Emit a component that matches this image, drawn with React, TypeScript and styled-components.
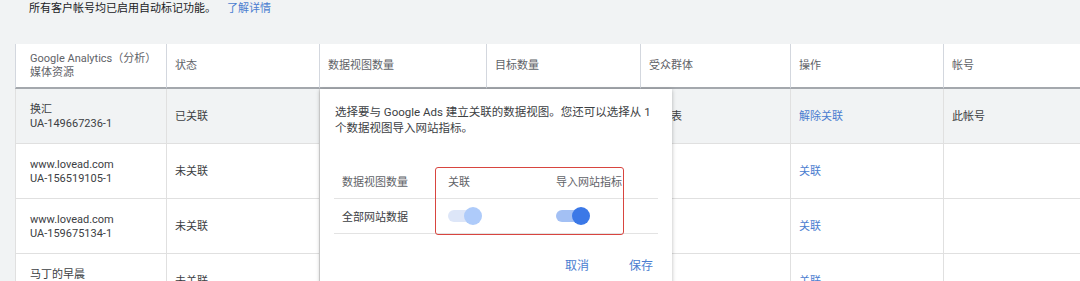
import React from "react";
import styled, { createGlobalStyle } from "styled-components";

const GlobalStyle = createGlobalStyle`
  html, body {
    margin: 0;
    padding: 0;
    overflow: hidden;
    background: #f1f3f4;
  }
  body {
    font-family: Roboto, "Noto Sans CJK SC", "Noto Sans", sans-serif;
    color: #3c4043;
  }
  * {
    box-sizing: border-box;
  }
`;

const Notice = styled.div`
  padding: 1px 0 0 29px;
  font-size: 11px;
  line-height: 16px;
  color: #202124;
`;

const Link = styled.a`
  color: #4a7dd0;
  text-decoration: none;
  cursor: pointer;
`;

const NoticeLink = styled(Link)`
  margin-left: 11px;
`;

const TableWrap = styled.div`
  position: relative;
  margin: 27px 0 0 15px;
  width: 1100px;
`;

const Row = styled.div<{ $shaded?: boolean }>`
  display: grid;
  grid-template-columns: 151px 153px 167px 154px 150px 153px 1fr;
  background: ${(p) => (p.$shaded ? "#f1f3f4" : "#ffffff")};
`;

const HeadCell = styled.div<{ $first?: boolean }>`
  height: 45px;
  display: flex;
  flex-direction: column;
  justify-content: center;
  padding: 0 8px 0 ${(p) => (p.$first ? "14px" : "8px")};
  border-left: 1px solid #d3d7de;
  border-bottom: 2px solid #a4a8ad;
  font-size: 11px;
  line-height: 14px;
  color: #5f6368;
`;

const Cell = styled.div<{ $first?: boolean }>`
  height: 55px;
  display: flex;
  flex-direction: column;
  justify-content: center;
  padding: 1px 8px 0 ${(p) => (p.$first ? "14px" : "8px")};
  border-left: 1px solid #e0e0e0;
  border-bottom: 1px solid #e0e0e0;
  font-size: 11px;
  line-height: 14px;
  color: #3c4043;
  white-space: nowrap;
`;

const Dialog = styled.div`
  position: absolute;
  left: 305px;
  top: 45px;
  width: 352px;
  height: 205px;
  background: #ffffff;
  box-shadow: 0 1px 4px rgba(0, 0, 0, 0.28);
  padding: 15px 14px 0 15px;
`;

const Intro = styled.p`
  margin: 0;
  font-size: 11.5px;
  line-height: 16px;
  color: #3c4043;
`;

const ViewGrid = styled.div`
  margin-top: 28px;
  margin-left: -1px;
`;

const ViewRow = styled.div`
  display: grid;
  grid-template-columns: 106px 108px 1fr;
  align-items: center;
  height: 35px;
  border-bottom: 1px solid #e3e3e3;
`;

const ViewHead = styled.div`
  padding-left: 8px;
  font-size: 11px;
  color: #5f6368;
`;

const ViewCell = styled.div`
  padding-left: 8px;
  font-size: 11px;
  color: #3c4043;
  display: flex;
  align-items: center;
`;

const Toggle = styled.span<{ $track: string; $knob: string }>`
  position: relative;
  display: inline-block;
  width: 34px;
  height: 18px;

  &::before {
    content: "";
    position: absolute;
    left: 0;
    top: 3px;
    width: 30px;
    height: 12px;
    border-radius: 6px;
    background: ${(p) => p.$track};
  }

  &::after {
    content: "";
    position: absolute;
    right: 0;
    top: 0;
    width: 18px;
    height: 18px;
    border-radius: 50%;
    background: ${(p) => p.$knob};
  }
`;

const Highlight = styled.div`
  position: absolute;
  left: 115px;
  top: 78px;
  width: 189px;
  height: 68px;
  border: 1.5px solid #d8453f;
  border-radius: 3px;
  pointer-events: none;
`;

const Actions = styled.div`
  display: flex;
  justify-content: flex-end;
  gap: 30px;
  margin-top: 20px;
`;

const TextButton = styled.button`
  border: none;
  background: none;
  padding: 4px 5px;
  font-family: inherit;
  font-size: 12px;
  line-height: 16px;
  color: #4a7dd0;
  cursor: pointer;
`;

const headers = [
  ["Google Analytics（分析）", "媒体资源"],
  ["状态"],
  ["数据视图数量"],
  ["目标数量"],
  ["受众群体"],
  ["操作"],
  ["帐号"],
];

type RowData = {
  name: string;
  id: string;
  status: string;
  audience?: string;
  action: string;
  account?: string;
  shaded?: boolean;
};

const rows: RowData[] = [
  { name: "换汇", id: "UA-149667236-1", status: "已关联", audience: "查看表", action: "解除关联", account: "此帐号", shaded: true },
  { name: "www.lovead.com", id: "UA-156519105-1", status: "未关联", action: "关联" },
  { name: "www.lovead.com", id: "UA-159675134-1", status: "未关联", action: "关联" },
  { name: "马丁的早晨", id: "UA-161204387-1", status: "未关联", action: "关联" },
];

export default function App() {
  return (
    <>
      <GlobalStyle />
      <Notice>
        所有客户帐号均已启用自动标记功能。
        <NoticeLink>了解详情</NoticeLink>
      </Notice>

      <TableWrap>
        <Row>
          {headers.map((lines, i) => (
            <HeadCell key={i} $first={i === 0}>
              {lines.map((l) => (
                <span key={l}>{l}</span>
              ))}
            </HeadCell>
          ))}
        </Row>

        {rows.map((r, i) => (
          <Row key={i} $shaded={r.shaded}>
            <Cell $first>
              <span>{r.name}</span>
              <span>{r.id}</span>
            </Cell>
            <Cell>{r.status}</Cell>
            <Cell />
            <Cell />
            <Cell>{r.audience}</Cell>
            <Cell>
              <Link>{r.action}</Link>
            </Cell>
            <Cell>{r.account}</Cell>
          </Row>
        ))}

        <Dialog>
          <Intro>
            选择要与 Google Ads 建立关联的数据视图。您还可以选择从 1
            个数据视图导入网站指标。
          </Intro>
          <ViewGrid>
            <ViewRow>
              <ViewHead>数据视图数量</ViewHead>
              <ViewHead>关联</ViewHead>
              <ViewHead>导入网站指标</ViewHead>
            </ViewRow>
            <ViewRow>
              <ViewCell>全部网站数据</ViewCell>
              <ViewCell>
                <Toggle $track="#dde6f8" $knob="#aecbfa" />
              </ViewCell>
              <ViewCell>
                <Toggle $track="#a3c0f4" $knob="#3b78e7" />
              </ViewCell>
            </ViewRow>
          </ViewGrid>
          <Actions>
            <TextButton>取消</TextButton>
            <TextButton>保存</TextButton>
          </Actions>
          <Highlight />
        </Dialog>
      </TableWrap>
    </>
  );
}
